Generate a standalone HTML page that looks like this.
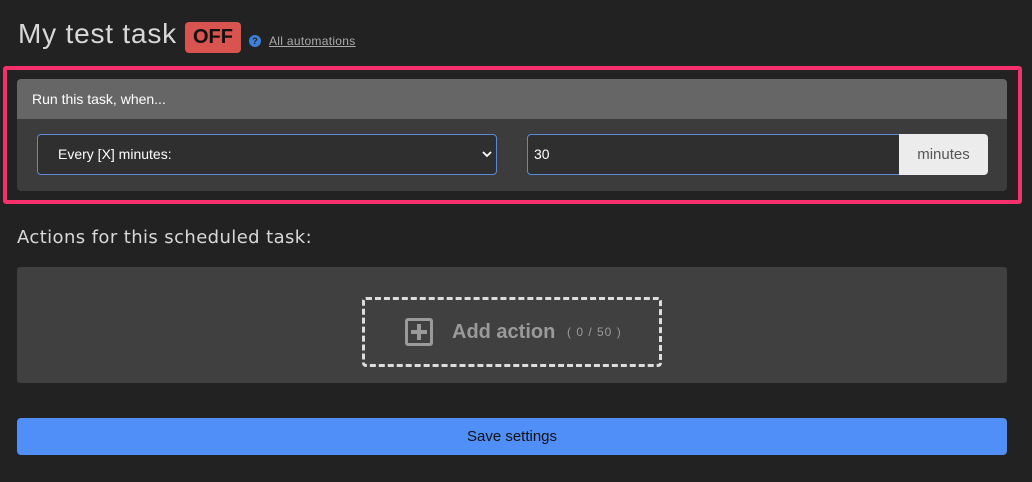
<!DOCTYPE html>
<html><head><style>
body{margin:0;background:#222;width:1032px;height:482px;overflow:hidden;font-family:"Liberation Sans","DejaVu Sans",sans-serif;position:relative;color:#ddd}
div,span{position:absolute;box-sizing:border-box}
</style></head><body>
<div style="left:18px;top:16px;font-size:28px;color:#d8d8d8;line-height:36px;letter-spacing:0.8px">My test task</div>
<div style="left:185px;top:22px;width:56px;height:31px;background:#d9534f;border-radius:4px;color:#111;font-weight:bold;font-size:20px;line-height:31px;text-align:center">OFF</div>
<div style="left:249px;top:35px;width:12px;height:12px;border-radius:50%;background:#3d7fd9;color:#222;font-size:9px;font-weight:bold;line-height:12px;text-align:center">?</div>
<div style="left:269px;top:33px;font-size:12px;color:#aaa;text-decoration:underline;line-height:16px;letter-spacing:0.3px">All automations</div>

<div style="left:3px;top:66px;width:1019px;height:138px;border:4px solid #f5306a;border-radius:3px"></div>
<div style="left:17px;top:79px;width:990px;height:112px;background:#3c3c3c;border-radius:4px;overflow:hidden">
  <div style="left:0;top:0;width:990px;height:40px;background:#666;color:#fff;font-size:14px;line-height:40px;padding-left:15px">Run this task, when...</div>
</div>
<div style="left:37px;top:134px;width:460px;height:41px;background:#2f2f2f;border:1px solid #5b8bd6;border-radius:4px;color:#fff;font-size:14px;line-height:39px;padding-left:20px">Every [X] minutes:
  <svg style="position:absolute;right:4px;top:15px" width="10" height="8" viewBox="0 0 10 8"><path d="M1 2l4 4 4-4" stroke="#fff" stroke-width="1.8" fill="none"/></svg></div>
<div style="left:527px;top:134px;width:373px;height:41px;background:#2f2f2f;border:1px solid #5b8bd6;border-radius:4px 0 0 4px;color:#fff;font-size:14px;line-height:39px;padding-left:6px">30</div>
<div style="left:899px;top:134px;width:89px;height:41px;background:#ececec;border-radius:0 4px 4px 0;color:#555;font-size:15px;line-height:41px;text-align:center">minutes</div>

<div style="left:17px;top:226px;font-family:'DejaVu Sans',sans-serif;font-size:18px;color:#d8d8d8;line-height:24px;letter-spacing:0.4px">Actions for this scheduled task:</div>
<div style="left:17px;top:267px;width:990px;height:116px;background:#404040;border-radius:3px"></div>
<div style="left:362px;top:297px;width:300px;height:70px;border:3px dashed #ddd;border-radius:4px"></div>
<div style="left:405px;top:318px;width:28px;height:28px;border:3px solid #9a9a9a;border-radius:3px"></div>
<div style="left:411px;top:330px;width:16px;height:4px;background:#9a9a9a"></div>
<div style="left:417px;top:324px;width:4px;height:16px;background:#9a9a9a"></div>
<div style="left:452px;top:318px;font-size:20px;font-weight:bold;color:#9a9a9a;line-height:28px">Add action</div>
<div style="left:567px;top:324px;font-size:12px;color:#9a9a9a;line-height:16px;letter-spacing:1px">( 0 / 50 )</div>

<div style="left:17px;top:418px;width:990px;height:37px;background:#4f8ff7;border-radius:4px;color:#111;font-size:15px;line-height:37px;text-align:center">Save settings</div>
</body></html>
